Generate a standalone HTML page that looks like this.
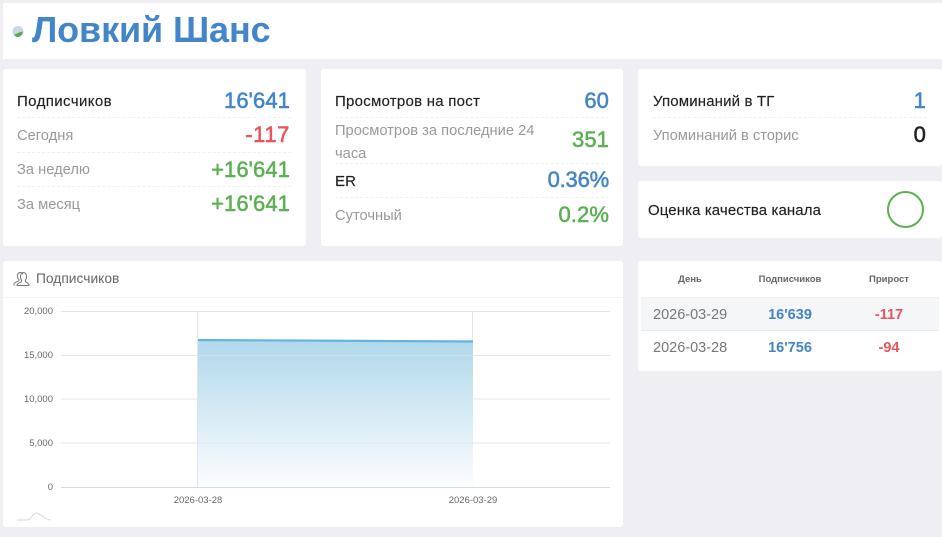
<!DOCTYPE html>
<html><head><meta charset="utf-8">
<style>
html,body{margin:0;padding:0}
body{width:942px;height:537px;overflow:hidden;background:#eeeef3;font-family:"Liberation Sans",sans-serif;position:relative}
.c{position:absolute;background:#fff;border-radius:3px}
.t{position:absolute;white-space:nowrap;line-height:20px}
.r{text-align:right}
.k{color:#1f1f1f;font-size:15px;letter-spacing:.15px;-webkit-text-stroke:.15px #1f1f1f}
.g{color:#999;font-size:14.700px}
.v{font-size:22px;line-height:26px;font-weight:400;-webkit-text-stroke:.55px;letter-spacing:.1px}
.b{color:#4285c8}.red{color:#e8545a}.gr{color:#5cb052}
.l{position:absolute;height:0;border-top:1px dashed #f0f0f0}
.h{font-size:9.500px;font-weight:700;color:#666;text-align:center;position:absolute;line-height:12px}
.d{font-size:14.500px;color:#777;position:absolute;line-height:20px}
.n{font-size:14.500px;font-weight:700;position:absolute;text-align:center;line-height:20px}
</style></head><body>
<div class="c" style="left:3px;top:3px;width:939px;height:56px;border-radius:0"></div>
<svg style="position:absolute;left:12px;top:25px" width="13" height="13" viewBox="0 0 13 13"><circle cx="6" cy="6.500" r="5.500" fill="#c9d8e6"/><path d="M2 9.500C5 9 7 7 11 6.500 10.500 10 8 12 5.500 12 4 12 3 11 2 9.500Z" fill="#5fa655"/></svg>
<div class="t" style="left:32px;top:10px;font-size:36px;line-height:40px;color:#4285c8;font-weight:700;letter-spacing:-.1px">Ловкий Шанс</div>

<div class="c" style="left:3px;top:69px;width:303px;height:177px"></div>
<div class="t k" style="left:17px;top:92px;letter-spacing:.4px">Подписчиков</div>
<div class="t v b r" style="right:652px;top:88px">16'641</div>
<div class="l" style="left:17px;top:117px;width:274px"></div>
<div class="t g" style="left:17px;top:126px">Сегодня</div>
<div class="t v red r" style="right:652px;top:122px;letter-spacing:.6px">-117</div>
<div class="l" style="left:17px;top:152px;width:274px"></div>
<div class="t g" style="left:17px;top:160px">За неделю</div>
<div class="t v gr r" style="right:652px;top:157px">+16'641</div>
<div class="l" style="left:17px;top:186px;width:274px"></div>
<div class="t g" style="left:17px;top:195px">За месяц</div>
<div class="t v gr r" style="right:652px;top:191px">+16'641</div>

<div class="c" style="left:321px;top:69px;width:302px;height:177px"></div>
<div class="t k" style="left:335px;top:92px;letter-spacing:.25px">Просмотров на пост</div>
<div class="t v b r" style="right:333px;top:88px">60</div>
<div class="l" style="left:335px;top:117px;width:274px"></div>
<div class="t g" style="left:335px;top:120px;line-height:23px;white-space:normal;width:215px">Просмотров за последние 24 часа</div>
<div class="t v gr r" style="right:333px;top:127px">351</div>
<div class="l" style="left:335px;top:163px;width:274px"></div>
<div class="t k" style="left:335px;top:172px">ER</div>
<div class="t v b r" style="right:333px;top:167px;letter-spacing:-.2px">0.36%</div>
<div class="l" style="left:335px;top:197px;width:274px"></div>
<div class="t g" style="left:335px;top:206px">Суточный</div>
<div class="t v gr r" style="right:333px;top:202px">0.2%</div>

<div class="c" style="left:638px;top:69px;width:304px;height:97px"></div>
<div class="t k" style="left:653px;top:92px">Упоминаний в ТГ</div>
<div class="t v b r" style="right:16px;top:88px">1</div>
<div class="l" style="left:653px;top:117px;width:274px"></div>
<div class="t g" style="left:653px;top:126px">Упоминаний в сторис</div>
<div class="t v r" style="right:16px;top:122px;color:#222">0</div>

<div class="c" style="left:638px;top:181px;width:304px;height:57px"></div>
<div class="t k" style="left:648px;top:201px;letter-spacing:.1px">Оценка качества канала</div>
<div style="position:absolute;left:887px;top:191px;width:33px;height:33px;border:2px solid #5cb052;border-radius:50%"></div>

<div class="c" style="left:638px;top:261px;width:304px;height:110px"></div>
<div class="h" style="left:640px;top:274px;width:100px">День</div>
<div class="h" style="left:740px;top:274px;width:100px">Подписчиков</div>
<div class="h" style="left:839px;top:274px;width:100px">Прирост</div>
<div style="position:absolute;left:641px;top:297px;width:298px;height:34px;background:#f5f6f8;border-bottom:1px solid #e9e9ee;border-top:1px solid #f0f0f3;box-sizing:border-box"></div>
<div class="d" style="left:653px;top:305px">2026-03-29</div>
<div class="n b" style="left:740px;top:305px;width:100px">16'639</div>
<div class="n red" style="left:839px;top:305px;width:100px">-117</div>
<div class="d" style="left:653px;top:338px">2026-03-28</div>
<div class="n b" style="left:740px;top:338px;width:100px">16'756</div>
<div class="n red" style="left:839px;top:338px;width:100px">-94</div>

<div class="c" style="left:3px;top:261px;width:620px;height:266px"></div>
<div style="position:absolute;left:3px;top:297px;width:620px;height:1px;background:#f4f4f6"></div>
<svg style="position:absolute;left:13px;top:270px" width="17" height="17" viewBox="0 0 17 17" fill="none" stroke="#777" stroke-width="1"><path d="M1 15.500V14C1 12.500 4 12 5.500 11 6.200 10.500 6 9.500 5.500 9 4.500 8 4.300 6 4.500 5 5 2 9 1.500 10 4.500"/><path d="M4 15.500C4 13.500 6.500 13 8 12 9 11.300 8.700 10.300 8.200 9.500 7 7.500 7 3 10.500 2.500 14 3 14 7.500 12.800 9.500 12.300 10.300 12 11.300 13 12 14.500 13 16 13.500 16 15.500Z"/></svg>
<div class="t" style="left:36px;top:269px;font-size:13.800px;color:#666">Подписчиков</div>

<svg style="position:absolute;left:0;top:298px" width="630" height="230" font-family="Liberation Sans, sans-serif" font-size="9.500" fill="#666">
<defs><linearGradient id="a" x1="0" y1="0" x2="0" y2="1"><stop offset="0" stop-color="#b0d8ec"/><stop offset="1" stop-color="#fcfdfe"/></linearGradient></defs>
<g stroke="#e2e5e8" stroke-width="1">
<line x1="61" x2="610" y1="13.500" y2="13.500"/><line x1="61" x2="610" y1="57.500" y2="57.500"/><line x1="61" x2="610" y1="101" y2="101"/><line x1="61" x2="610" y1="145" y2="145"/><line x1="61" x2="610" y1="189.500" y2="189.500" stroke="#d3dae0"/>
<line x1="197.500" x2="197.500" y1="13" y2="189" stroke="#dde6ec"/><line x1="472.500" x2="472.500" y1="13" y2="189" stroke="#dde6ec"/></g>
<path d="M198 42L473 43.500V189H198Z" fill="url(#a)"/>
<g stroke="#dce3e8" stroke-width="1" opacity=".6"><line x1="198" x2="473" y1="57.500" y2="57.500"/><line x1="198" x2="473" y1="101" y2="101"/><line x1="198" x2="473" y1="145" y2="145"/></g>
<path d="M198 42L473 43.500" stroke="#68b2de" stroke-width="2.200" fill="none"/>
<g text-anchor="end"><text x="53" y="16">20,000</text><text x="53" y="60">15,000</text><text x="53" y="104">10,000</text><text x="53" y="148">5,000</text><text x="53" y="192">0</text></g>
<g text-anchor="middle"><text x="198" y="205">2026-03-28</text><text x="473" y="205">2026-03-29</text></g>
<path d="M17 222H27C31 222 33 215 36 215 39 215 39 217 41 217 43 217 44 222 51 222" stroke="#d5d5d5" fill="none"/>
</svg>
</body></html>
